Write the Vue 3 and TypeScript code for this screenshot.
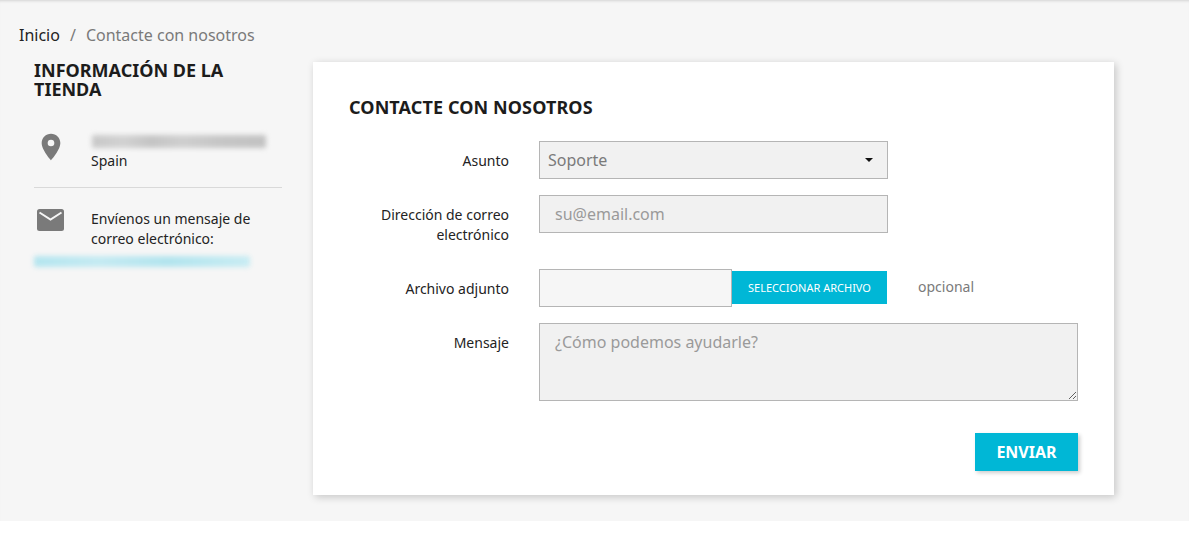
<template>
  <div class="page">
    <nav class="crumbs">
      <span class="home">Inicio</span>
      <span class="sep">/</span>
      <span class="current">Contacte con nosotros</span>
    </nav>
    <div class="columns">
      <aside class="info">
        <h2 class="info-title">INFORMACIÓN DE LA TIENDA</h2>
        <div class="info-row address">
          <svg class="pin" width="32" height="32" viewBox="0 0 24 24" aria-hidden="true">
            <path fill="#7a7a7a" d="M12 2C8.13 2 5 5.13 5 9c0 5.25 7 13 7 13s7-7.75 7-13c0-3.87-3.13-7-7-7zm0 9.5a2.5 2.5 0 1 1 0-5 2.5 2.5 0 0 1 0 5z" />
          </svg>
          <div class="info-text">
            <div class="blur grey"></div>
            <div>Spain</div>
          </div>
        </div>
        <div class="info-row mail">
          <svg class="env" width="27" height="22" viewBox="0 0 27 22" aria-hidden="true">
            <rect width="27" height="22" rx="2.5" fill="#7a7a7a" />
            <path d="M2.5 3.5 13.5 10.5 24.5 3.5" fill="none" stroke="#f6f6f6" stroke-width="2" />
          </svg>
          <div class="info-text">Envíenos un mensaje de correo electrónico:</div>
        </div>
        <div class="blur cyan"></div>
      </aside>

      <section class="card">
        <h1 class="card-title">CONTACTE CON NOSOTROS</h1>
        <form class="form" @submit.prevent>
          <label class="lab">Asunto</label>
          <div class="ctl select-wrap">
            <select class="field select"><option>Soporte</option></select>
            <span class="caret"></span>
          </div>

          <label class="lab two">Dirección de correo electrónico</label>
          <div class="ctl"><input class="field email" type="text" placeholder="su@email.com" /></div>

          <label class="lab">Archivo adjunto</label>
          <div class="file-line">
            <div class="file-box"></div>
            <button class="pick" type="button">SELECCIONAR ARCHIVO</button>
            <span class="opt">opcional</span>
          </div>

          <label class="lab">Mensaje</label>
          <textarea class="area" placeholder="¿Cómo podemos ayudarle?"></textarea>
        </form>
        <div class="actions"><button class="send" type="button">ENVIAR</button></div>
      </section>
    </div>
  </div>
</template>

<script setup lang="ts">
</script>

<style>
html, body { background: #fff; }
</style>

<style scoped>
.page {
  box-sizing: border-box;
  height: 521px;
  background: #f6f6f6;
  box-shadow: inset 0 3px 3px -2px rgba(0, 0, 0, .14);
  padding: 24px 0 0 19px;
  font-family: "Noto Sans", sans-serif;
  font-size: 14px;
  color: #232323;
}
.crumbs { display: flex; gap: 10px; font-size: 16px; line-height: 22px; color: #7a7a7a; }
.home { color: #232323; }
.columns { display: flex; margin-top: 16px; align-items: flex-start; }
.info { box-sizing: border-box; width: 294px; padding: 0 0 0 15px; flex: none; }
.info-title { margin: -1px 0 0; width: 230px; font-size: 18px; line-height: 19px; font-weight: 700; color: #1c1c1c; }
.info-row { display: flex; width: 248px; }
.address { margin-top: 34px; padding-bottom: 16px; border-bottom: 1px solid #d9d9d9; }
.info-text { font-size: 14px; line-height: 20px; }
.pin { flex: none; margin: -2px 0 0 1px; }
.address .info-text { margin-left: 24px; }
.mail { margin-top: 21px; }
.env { flex: none; margin: 0 0 0 3px; }
.mail .info-text { margin-left: 27px; width: 170px; }
.blur { filter: blur(2.5px); border-radius: 2px; }
.grey {
  width: 174px;
  height: 13px;
  margin: 2px 0 3px 1px;
  background: linear-gradient(90deg, #c8c8c8, #d2d2d2 18%, #c4c4c4 34%, #cfcfcf 52%, #c6c6c6 72%, #c2c2c2);
}
.cyan {
  width: 216px;
  height: 11px;
  margin: 7px 0 0;
  background: linear-gradient(90deg, #b4e5ef, #c4eaf2 30%, #b2e4ee 62%, #bfe9f1 85%, #c8ecf3);
}

.card {
  box-sizing: border-box;
  width: 801px;
  height: 433px;
  background: #fff;
  box-shadow: 2px 2px 8px rgba(0, 0, 0, .2);
  padding: 33px 36px 0;
}
.card-title { margin: 0; font-size: 18px; line-height: 24px; font-weight: 700; letter-spacing: .1px; color: #1c1c1c; }
.form {
  display: grid;
  grid-template-columns: 160px 1fr;
  column-gap: 30px;
  row-gap: 16px;
  margin-top: 22px;
}
.lab { text-align: right; font-size: 14px; line-height: 20px; padding-top: 10px; color: #232323; }
.lab.two { padding-bottom: 8px; }
.ctl { width: 349px; }
.select-wrap { position: relative; }
.field {
  box-sizing: border-box;
  display: block;
  width: 100%;
  height: 38px;
  border: 1px solid #b5b5b5;
  border-radius: 0;
  background: #f1f1f1;
  font-family: inherit;
  font-size: 16px;
  color: #7a7a7a;
  outline: none;
}
.select { appearance: none; padding: 0 8px; }
.email { padding: 0 15px; }
.email::placeholder, .area::placeholder { color: #9a9a9a; opacity: 1; }
.caret {
  position: absolute;
  right: 15px;
  top: 17px;
  border-left: 4px solid transparent;
  border-right: 4px solid transparent;
  border-top: 4px solid #111;
}
.file-line { display: flex; align-items: flex-start; height: 38px; }
.file-box { box-sizing: border-box; width: 193px; height: 38px; border: 1px solid #b5b5b5; background: #f6f6f6; }
.pick {
  width: 155px;
  height: 33px;
  margin-top: 2px;
  border: 0;
  background: #00b7d6;
  color: #fff;
  font-family: inherit;
  font-size: 11px;
  padding: 0;
}
.opt { margin: 8px 0 0 31px; font-size: 14px; line-height: 20px; color: #7a7a7a; }
.area {
  box-sizing: border-box;
  display: block;
  width: 539px;
  height: 78px;
  border: 1px solid #b5b5b5;
  border-radius: 0;
  background: #f1f1f1;
  font-family: inherit;
  font-size: 16px;
  padding: 7px 15px;
  outline: none;
  color: #7a7a7a;
}
.actions { display: flex; justify-content: flex-end; margin-top: 32px; }
.send {
  width: 103px;
  height: 38px;
  border: 0;
  background: #00b7d6;
  color: #fff;
  font-family: inherit;
  font-size: 16px;
  font-weight: 700;
  box-shadow: 2px 2px 4px rgba(0, 0, 0, .2);
  padding: 0;
}
</style>
